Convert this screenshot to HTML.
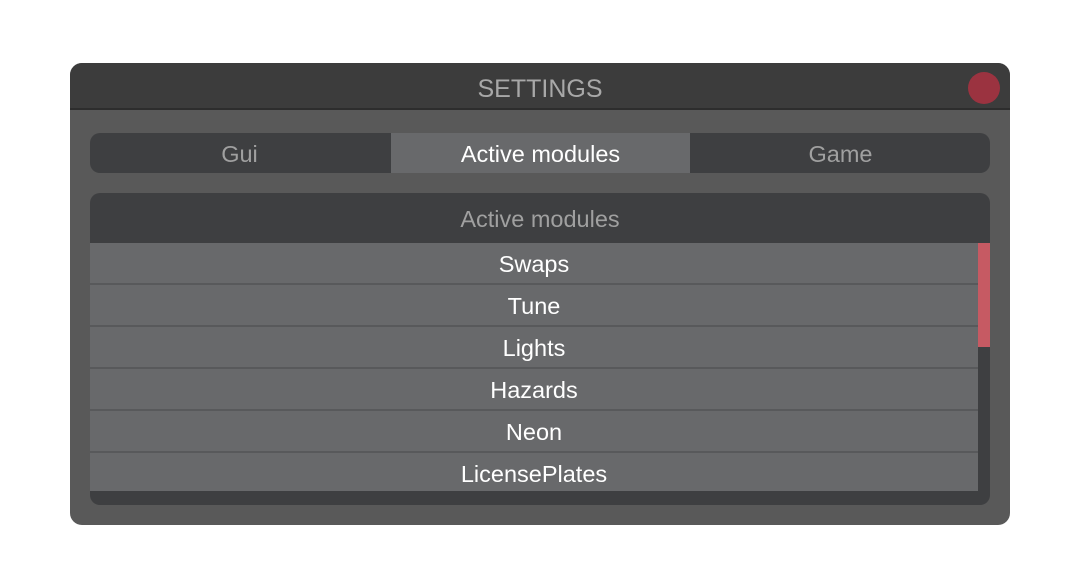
<!DOCTYPE html>
<html><head><style>
*{margin:0;padding:0;box-sizing:border-box}
body{width:1080px;height:588px;background:#fff;position:relative;font-family:"Liberation Sans",sans-serif;overflow:hidden}
.win{position:absolute;left:70px;top:63px;width:940px;height:462px;background:#595959;border-radius:12px;overflow:hidden}
.title{position:absolute;left:0;top:0;width:940px;height:47px;background:#3c3c3c;border-bottom:2px solid #2d2d2d;color:#a8a8a8;font-size:25px;text-align:center;line-height:53px}
.close{position:absolute;left:898px;top:9px;width:32px;height:32px;border-radius:50%;background:#9b3340}
.tabs{position:absolute;left:20px;top:70px;width:900px;height:40px;border-radius:10px;overflow:hidden;background:#3e3f41}
.tab{position:absolute;top:0;height:40px;line-height:43px;text-align:center;font-size:23.5px;color:#a0a0a0}
.panel{position:absolute;left:20px;top:130px;width:900px;height:312px;background:#3e3f41;border-radius:10px;overflow:hidden}
.ph{height:50px;line-height:53px;text-align:center;color:#a0a0a0;font-size:23.5px}
.row{position:absolute;left:0;width:888px;height:42px;background:#68696b;border-bottom:2px solid #58595b;color:#fff;text-align:center;font-size:23.5px;line-height:43px}
.sb{position:absolute;left:888px;top:50px;width:12px;height:104px;background:#c65a63}
</style></head><body>
<div class="win">
<div class="title">SETTINGS</div>
<div class="close"></div>
<div class="tabs">
<div class="tab" style="left:0;width:299px">Gui</div>
<div class="tab" style="left:301px;width:299px;background:#68696b;color:#fff">Active modules</div>
<div class="tab" style="left:601px;width:299px">Game</div>
</div>
<div class="panel">
<div class="ph">Active modules</div>
<div class="row" style="top:50px">Swaps</div>
<div class="row" style="top:92px">Tune</div>
<div class="row" style="top:134px">Lights</div>
<div class="row" style="top:176px">Hazards</div>
<div class="row" style="top:218px">Neon</div>
<div class="row" style="top:260px;height:38px;border-bottom:none">LicensePlates</div>
<div class="sb"></div>
</div>
</div>
</body></html>
